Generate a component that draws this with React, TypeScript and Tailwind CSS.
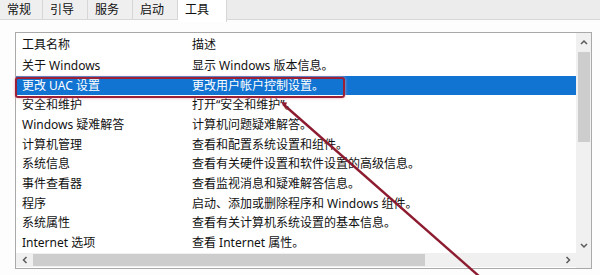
import React from "react";

const rows: [string, string][] = [
  ["关于 Windows", "显示 Windows 版本信息。"],
  ["更改 UAC 设置", "更改用户帐户控制设置。"],
  ["安全和维护", "打开“安全和维护”。"],
  ["Windows 疑难解答", "计算机问题疑难解答。"],
  ["计算机管理", "查看和配置系统设置和组件。"],
  ["系统信息", "查看有关硬件设置和软件设置的高级信息。"],
  ["事件查看器", "查看监视消息和疑难解答信息。"],
  ["程序", "启动、添加或删除程序和 Windows 组件。"],
  ["系统属性", "查看有关计算机系统设置的基本信息。"],
  ["Internet 选项", "查看 Internet 属性。"],
];

const tabs = [
  { label: "常规", w: "w-[43px]" },
  { label: "引导", w: "w-[45px]" },
  { label: "服务", w: "w-[45px]" },
  { label: "启动", w: "w-[45px]" },
];

function Chevron({ dir }: { dir: "up" | "down" | "left" | "right" }) {
  const d =
    dir === "up"
      ? "M1 6 L4 3 L7 6"
      : dir === "down"
      ? "M1 3 L4 6 L7 3"
      : dir === "left"
      ? "M5.5 1 L2.5 4 L5.5 7"
      : "M2.5 1 L5.5 4 L2.5 7";
  return (
    <svg width="8" height="8" viewBox="0 0 8 8">
      <path d={d} fill="none" stroke="#5a5a5a" strokeWidth="1.5" />
    </svg>
  );
}

export default function App() {
  return (
    <div
      className="relative w-[600px] h-[275px] overflow-hidden bg-white text-[12px] text-[#111]"
      style={{ fontFamily: '"Noto Sans", "Noto Sans CJK SC", sans-serif' }}
    >
      {/* Tab strip */}
      <div className="flex h-[20px] bg-[#ececec] border-b border-[#d8d8d8]">
        {tabs.map((t) => (
          <div
            key={t.label}
            className={`${t.w} h-[19px] bg-[#efefef] border-r border-[#d6d6d6] pl-[7px] leading-[19px]`}
          >
            {t.label}
          </div>
        ))}
        <div className="relative z-10 w-[49px] h-[22px] bg-white border-r border-[#d6d6d6] pl-[7px] leading-[20px]">
          工具
        </div>
      </div>

      {/* Panel */}
      <div className="bg-[#fdfdfd] pl-[15px] pt-[12px] h-[255px]">
        <div className="flex w-[577px] h-[237px] border border-[#a9a9a9] bg-white">
          <div className="flex flex-col w-[560px]">
            {/* Header */}
            <div className="flex h-[23px] items-center">
              <div className="w-[176px] pl-[6px]">工具名称</div>
              <div>描述</div>
            </div>
            {rows.map(([name, desc], i) => {
              const sel = i === 1;
              return (
                <div
                  key={name}
                  className={`flex h-[19.7px] items-center whitespace-nowrap ${
                    sel ? "bg-[#1174d3] text-white" : ""
                  }`}
                >
                  <div className="w-[176px] pl-[6px]">{name}</div>
                  <div>{desc}</div>
                </div>
              );
            })}
            {/* Horizontal scrollbar */}
            <div className="flex h-[14px] items-center bg-[#f0f0f0]">
              <div className="w-[17px] flex justify-center">
                <Chevron dir="left" />
              </div>
              <div className="w-[392px] h-[12px] bg-[#cdcdcd]" />
              <div className="flex-1" />
              <div className="w-[17px] flex justify-center">
                <Chevron dir="right" />
              </div>
            </div>
          </div>
          {/* Vertical scrollbar */}
          <div className="flex flex-col w-[15px] bg-[#f0f0f0]">
            <div className="flex flex-col h-[220px]">
              <div className="h-[17px] flex items-center justify-center">
                <Chevron dir="up" />
              </div>
              <div className="mt-[2px] mx-auto w-[12px] h-[90px] bg-[#cdcdcd]" />
              <div className="flex-1" />
              <div className="h-[17px] flex items-center justify-center">
                <Chevron dir="down" />
              </div>
            </div>
            <div className="flex-1 bg-[#f0f0f0]" />
          </div>
        </div>
      </div>

      {/* Red annotation box */}
      <div className="absolute left-[15px] top-[77px] w-[330px] h-[21px] border-[2.5px] border-[#9b1f35] rounded-[3px] shadow-[0_0_3px_#f2a3b3]" />

      {/* Red annotation line */}
      <svg className="absolute left-0 top-0" width="600" height="275" viewBox="0 0 600 275">
        <path d="M281 102 L287 102.5 L285 108 Z" fill="#8e1c30" />
        <line x1="283" y1="104" x2="480" y2="277" stroke="#8e1c30" strokeWidth="2.4" />
      </svg>
    </div>
  );
}
